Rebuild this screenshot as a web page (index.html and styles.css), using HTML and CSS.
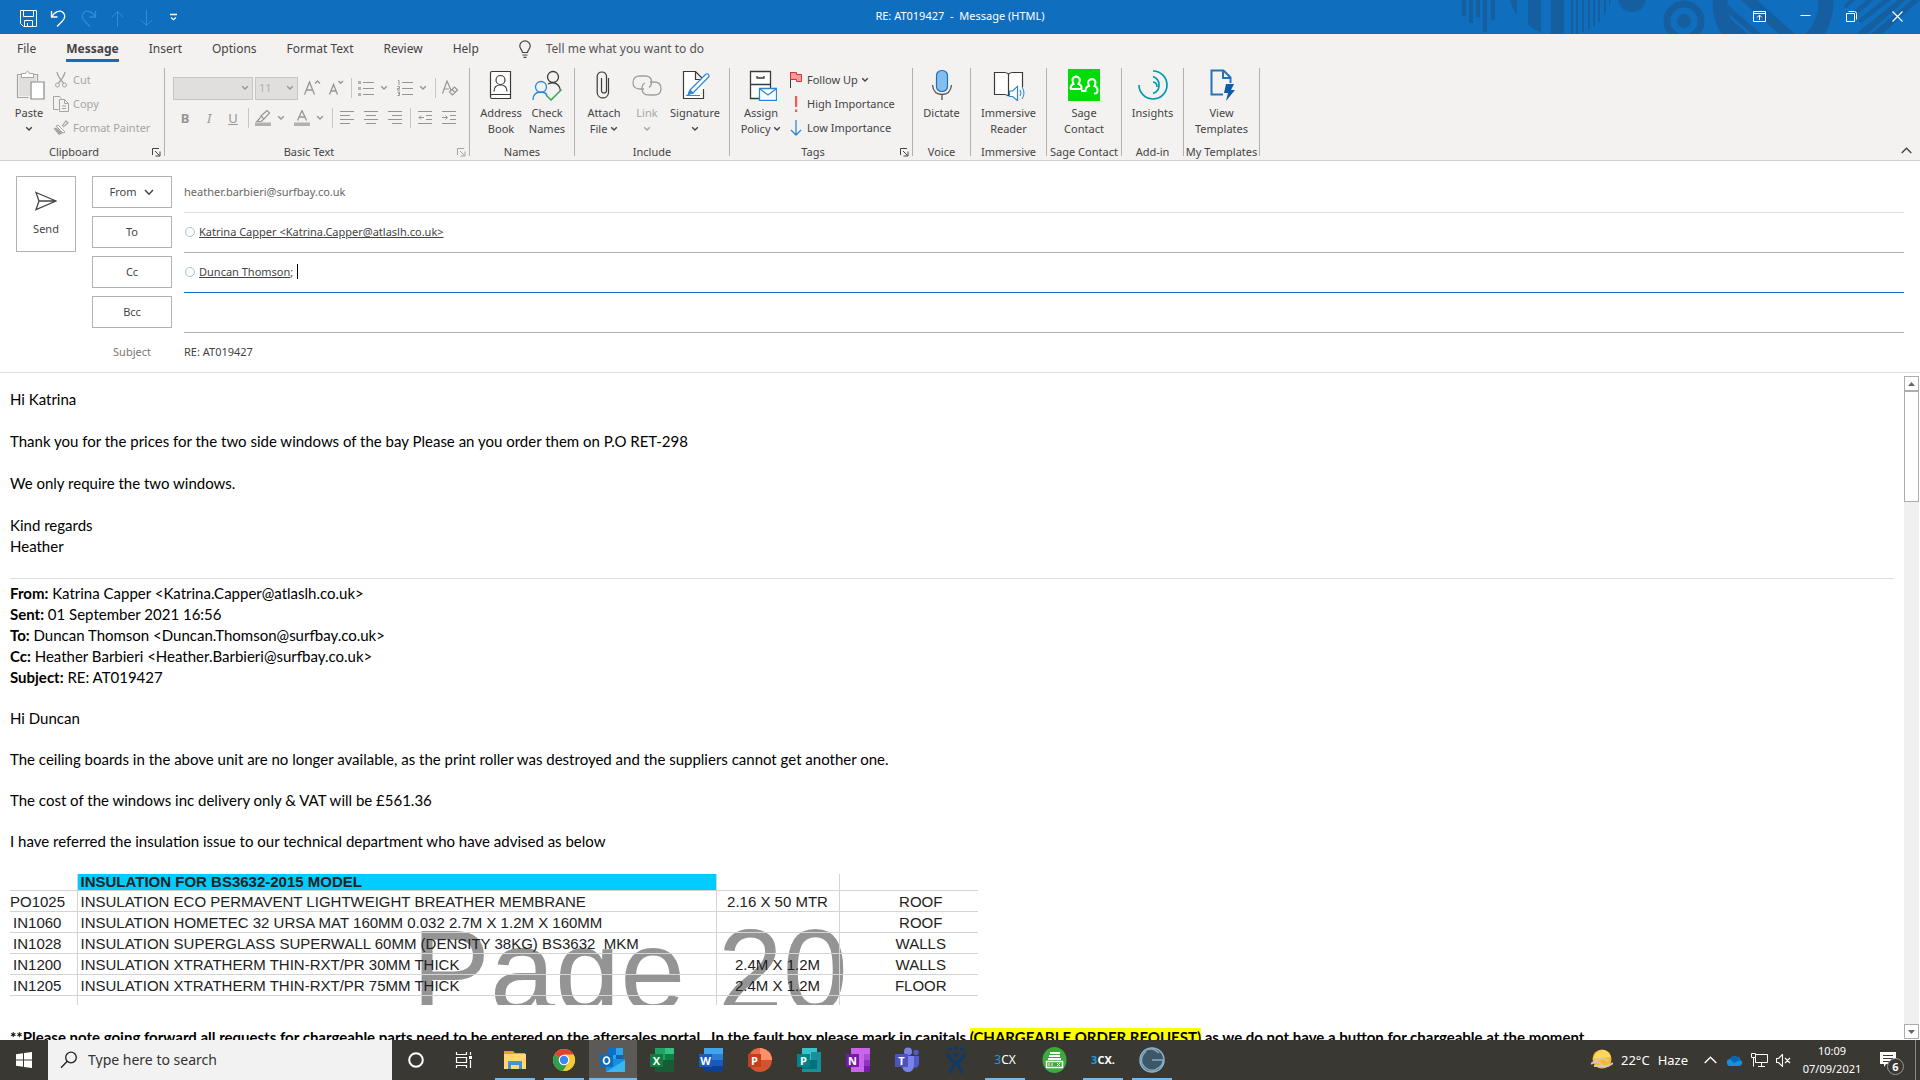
FILE: index.html
```
<!DOCTYPE html>
<html lang="en">
	<head>
		<meta charset="utf-8" />
		<title>RE: AT019427 - Message (HTML)</title>
		<link rel="stylesheet" href="styles.css">
	</head>
	<body>
		<svg class="defs" width="0" height="0">
			<symbol id="chev" viewBox="0 0 8 6"><path d="M1.2 1.2 4 4 6.8 1.2" fill="none" stroke="currentColor" stroke-width="1.4"/></symbol>
			<symbol id="launch" viewBox="0 0 9 9"><path d="M.5 7V.5H7M3 3l4.5 4.5M8 3.500V8H3.500" fill="none" stroke="currentColor"/></symbol>
		</svg>

		<!-- title bar -->
		<header class="titlebar">
			<svg class="deco" width="520" height="34" viewBox="0 0 520 34">
				<g fill="#155fa0">
					<path d="M62 0h4v16h-4zM69 0h4v23h-4zM76 0h4v17h-4zM83 0h4v32h-4zM91 0h4v20h-4z"/>
					<path d="M110 0h7v15q-5-7-7-15zM128 0h13v33l-13-8zM151 0h13v34h-13z"/>
					<path d="M171 0h2v34h-2zM176 0h2v34h-2zM182 0h2v32h-2zM188 0h2v30l-2 1zM193 0h2v26l-2 1zM198 0h2v21l-2 2zM204 0h2v13l-2 3zM209 0h2l-2 8z"/>
					<circle cx="232" cy="-2" r="14"/>
					<circle cx="284" cy="21" r="7"/>
					<path d="M341 0h16l38 34h-16zM328 5l33 29h-9L328 13zM328 17l20 17h-9l-11-9z"/>
					<path d="M444 5l6-5h6l-10 8zM451 13 467 0h7l-20 17zM458 20 483 0h8l-30 23zM456 34 498 0h8l-39 34zM471 34 512 0h8l-38 34z"/>
				</g>
				<circle cx="284" cy="21" r="17" fill="none" stroke="#155fa0" stroke-width="7"/>
				<circle cx="373" cy="2" r="53" fill="none" stroke="#155fa0" stroke-width="15"/>
			</svg>
			<div class="quick">
				<button aria-label="Save"><svg width="17" height="17" viewBox="0 0 17 17"><path d="M.5.5h16v16h-13l-3-3zM3.500.5v6h10v-6M4.500 16.500v-6h8v6M7.500 13v3.500" fill="none" stroke="#fff"/></svg></button>
				<button aria-label="Undo"><svg width="17" height="17" viewBox="0 0 17 17"><path d="M1.500 1v6h6M1.500 7C5 1 10 0 13 2.500c3 3 2 6-1 9l-5 5" fill="none" stroke="#fff" stroke-width="1.300"/></svg></button>
				<button aria-label="Redo" class="dim"><svg width="17" height="17" viewBox="0 0 17 17"><path d="M15.500 1v6h-6M15.500 7C12 1 7 0 4 2.500c-3 3-2 6 1 9l5 5" fill="none" stroke="currentColor" stroke-width="1.300"/></svg></button>
				<button aria-label="Previous" class="dim"><svg width="17" height="17" viewBox="0 0 17 17"><path d="M7.500 17V1.500M2 7l5.500-5.500L13 7" fill="none" stroke="currentColor"/></svg></button>
				<button aria-label="Next" class="dim"><svg width="17" height="17" viewBox="0 0 17 17"><path d="M6.500 0v15.500M1 10l5.500 5.500L12 10" fill="none" stroke="currentColor"/></svg></button>
				<button aria-label="Customise"><svg width="17" height="17" viewBox="0 0 17 17"><path d="M0 4.500h7M1 7.500l2.500 2.200L6 7.500" fill="none" stroke="#fff" stroke-width="1.300"/></svg></button>
			</div>
			<h1>RE: AT019427&nbsp; -&nbsp; Message (HTML)</h1>
			<div class="winbtns">
				<button aria-label="Ribbon display"><svg width="13" height="11" viewBox="0 0 13 11"><path d="M.5.5h12v10H.5zM.5 2.500h12M6.500 9V4M4 6.500 6.500 4 9 6.500" fill="none" stroke="#fff"/></svg></button>
				<button aria-label="Minimise"><svg width="11" height="11" viewBox="0 0 11 11"><path d="M.5 4.500h10" stroke="#fff"/></svg></button>
				<button aria-label="Restore"><svg width="11" height="11" viewBox="0 0 11 11"><path d="M.5 2.500h8v8h-8zM2.500.5h6a2 2 0 0 1 2 2v6" fill="none" stroke="#fff"/></svg></button>
				<button aria-label="Close"><svg width="11" height="11" viewBox="0 0 11 11"><path d="m.5.5 10 10m0-10-10 10" stroke="#fff" stroke-width="1.200"/></svg></button>
			</div>
		</header>

		<!-- tabs -->
		<nav class="tabs">
			<a href="#">File</a>
			<a href="#" class="active">Message</a>
			<a href="#">Insert</a>
			<a href="#">Options</a>
			<a href="#">Format Text</a>
			<a href="#">Review</a>
			<a href="#">Help</a>
			<label class="tell">
				<svg width="12" height="18" viewBox="0 0 12 18"><path d="M3.500 12.500c0-2.500-2.700-3.500-2.700-6.500a5.200 5.200 0 0 1 10.400 0c0 3-2.700 4-2.700 6.500zM3.500 15h5M4.500 17.300h3" fill="none" stroke="#444" stroke-width="1.200"/></svg>
				<input type="text" aria-label="Tell me" placeholder="Tell me what you want to do">
			</label>
		</nav>

		<!-- ribbon -->
		<div class="ribbon">
			<section class="group clipboard">
				<div class="tools">
					<button class="big">
						<svg width="32" height="32" viewBox="-2 0 32 32"><path d="M6 5.500H2.500v23h11M19 5.500h3.500V12" fill="none" stroke="#a6a4a2" stroke-width="1.200"/><path d="M4 7h17v6h-6v14H4z" fill="#e1dfdd"/><path d="M6.500 8.500v-4h4q2-4.500 4 0h4v4z" fill="#fff" stroke="#a6a4a2"/><path d="M16 13h13v17H16z" fill="#fff" stroke="#8a8886" stroke-width="1.200"/></svg>
						<span>Paste<br><svg class="ch"><use href="#chev"/></svg></span>
					</button>
					<div class="list off">
						<button><svg width="16" height="16" viewBox="0 0 16 16"><path d="M4 0c1 5 3 7 6.500 11M12 0c-1 5-3 7-6.500 11" fill="none" stroke="currentColor" stroke-width="1.300"/><circle cx="4.500" cy="13" r="2" fill="none" stroke="currentColor"/><circle cx="11.500" cy="13" r="2" fill="none" stroke="currentColor"/></svg>Cut</button>
						<button><svg width="16" height="16" viewBox="0 0 16 16"><path d="M5.500 13.500H.5V.5h6l2 2M6.500 3.500h5l4 4v8h-9zM11.500 3.500v4h4M9 10h4M9 12.500h4" fill="none" stroke="currentColor"/></svg>Copy</button>
						<button><svg width="16" height="16" viewBox="0 0 16 16"><path d="m9 6 4-5 2 2-5 4" fill="none" stroke="currentColor" stroke-width="1.200"/><path d="m5 5 7 7-2 1-7-7z" fill="#fff" stroke="currentColor"/><path d="M3 7.500.5 8.500 6 15l4-2z" fill="currentColor"/></svg>Format Painter</button>
					</div>
				</div>
				<h2>Clipboard <button class="launch" aria-label="Clipboard options"><svg width="9" height="9"><use href="#launch"/></svg></button></h2>
			</section>

			<section class="group basic">
				<div class="tools rows">
					<div class="row">
						<label class="combo font"><select disabled aria-label="Font"><option></option></select><svg class="ch"><use href="#chev"/></svg></label>
						<label class="combo size"><select disabled aria-label="Size"><option>11</option></select><svg class="ch"><use href="#chev"/></svg></label>
						<button class="t" aria-label="Grow font"><svg width="18" height="18" viewBox="0 0 18 18"><path d="M1.500 15.500 6.500 3l5 12.500M3.500 11h6M12 4.500l2.500-2.500L17 4.500" fill="none" stroke="currentColor" stroke-width="1.300"/></svg></button>
						<button class="t" aria-label="Shrink font"><svg width="18" height="18" viewBox="0 0 18 18"><path d="M2.500 15.500 6.500 5.500l4 10M4 12h5M11.500 2l2.200 2.300L16 2" fill="none" stroke="currentColor" stroke-width="1.300"/></svg></button>
						<i class="sep"></i>
						<button class="t" aria-label="Bullets"><svg width="16" height="16" viewBox="0 0 16 16"><path d="M5 2.500h11M5 8.500h11M5 14.500h11" stroke="currentColor"/><path d="M0 1h3v3H0zM0 7h3v3H0zM0 13h3v3H0z" fill="#b3b0ad"/></svg></button>
						<button class="c" aria-label="Bullet styles"><svg class="ch"><use href="#chev"/></svg></button>
						<button class="t" aria-label="Numbering"><svg width="16" height="16" viewBox="0 0 16 16"><path d="M5 2.500h11M5 8.500h11M5 14.500h11M1 .5h1V5M.5 6.500h2v2h-2v1.500H3M.5 12h2v3.500h-2M1 13.500h1.500" stroke="currentColor" fill="none"/></svg></button>
						<button class="c" aria-label="Number styles"><svg class="ch"><use href="#chev"/></svg></button>
						<i class="sep"></i>
						<button class="t" aria-label="Clear formatting"><svg width="18" height="18" viewBox="0 0 18 18"><path d="M1.500 14.500 6 2l4 9M3 10h5M8.500 13l5-5 3 3-5 5zM11 10.500l3 3" fill="none" stroke="currentColor" stroke-width="1.200"/></svg></button>
					</div>
					<div class="row">
						<button class="t"><b>B</b></button>
						<button class="t"><em>I</em></button>
						<button class="t"><u>U</u></button>
						<i class="sep"></i>
						<button class="t" aria-label="Highlight"><svg width="16" height="16" viewBox="0 0 16 16"><path d="m6 6 6-5.500L14.500 3 9 9zM6 6l-1 2-3 3.500h4L9 9" fill="none" stroke="currentColor" stroke-width="1.200"/><path d="M0 12.500h16V16H0z" fill="#b3b0ad"/></svg></button>
						<button class="c" aria-label="Highlight colours"><svg class="ch"><use href="#chev"/></svg></button>
						<button class="t" aria-label="Font colour"><svg width="16" height="16" viewBox="0 0 16 16"><path d="m3.500 10.500 4.500-10 4.500 10M5 7h6" fill="none" stroke="currentColor" stroke-width="1.300"/><path d="M0 12.500h16V16H0z" fill="#b3b0ad"/></svg></button>
						<button class="c" aria-label="Font colours"><svg class="ch"><use href="#chev"/></svg></button>
						<i class="sep"></i>
						<button class="t" aria-label="Left"><svg width="14" height="14"><path d="M0 .5h14M0 4.500h10M0 8.500h14M0 12.500h10" stroke="currentColor"/></svg></button>
						<button class="t" aria-label="Centre"><svg width="14" height="14"><path d="M0 .5h14M2 4.500h10M0 8.500h14M2 12.500h10" stroke="currentColor"/></svg></button>
						<button class="t" aria-label="Right"><svg width="14" height="14"><path d="M0 .5h14M4 4.500h10M0 8.500h14M4 12.500h10" stroke="currentColor"/></svg></button>
						<i class="sep"></i>
						<button class="t" aria-label="Decrease indent"><svg width="14" height="14"><path d="M0 .5h14M8 4.500h6M8 8.500h6M0 12.500h14M6 6.500H1M3 4.500l-2 2 2 2" stroke="currentColor" fill="none"/></svg></button>
						<button class="t" aria-label="Increase indent"><svg width="14" height="14"><path d="M0 .5h14M8 4.500h6M8 8.500h6M0 12.500h14M0 6.500h5M3.500 4.500l2 2-2 2" stroke="currentColor" fill="none"/></svg></button>
					</div>
				</div>
				<h2>Basic Text <button class="launch off" aria-label="Text options"><svg width="9" height="9"><use href="#launch"/></svg></button></h2>
			</section>

			<section class="group names">
				<div class="tools">
					<button class="big">
						<svg width="32" height="32" viewBox="0 0 32 32"><path d="M5.500 4q0-1.500 1.500-1.500h18.500v27H7q-1.500 0-1.500-1.500zM5.500 27q0-1.500 1.500-1.500h18.500" fill="#fff" stroke="#3b3a39" stroke-width="1.200"/><circle cx="15.500" cy="11" r="4.500" fill="none" stroke="#3b3a39" stroke-width="1.200"/><path d="M9 22.500q0-6.500 6.500-6.500t6.500 6.500" fill="none" stroke="#3b3a39" stroke-width="1.200"/></svg>
						<span>Address<br>Book</span>
					</button>
					<button class="big">
						<svg width="32" height="32" viewBox="0 0 32 32"><g fill="none" stroke-width="1.300"><circle cx="22" cy="8" r="5.500" stroke="#3b3a39"/><path d="M17 15q6-3 10 1 2 2 2.500 6" stroke="#3b3a39"/><circle cx="10" cy="18" r="5.500" stroke="#2b88d8"/><path d="M2 31q0-8 8-8 4 0 6 3" stroke="#2b88d8"/><path d="m15 26 5 5L30.500 20.500" stroke="#3aa356" stroke-width="1.500"/></g></svg>
						<span>Check<br>Names</span>
					</button>
				</div>
				<h2>Names</h2>
			</section>

			<section class="group include">
				<div class="tools">
					<button class="big">
						<svg width="32" height="32" viewBox="0 0 32 32"><path d="M13.500 9v12.500a2.500 2.500 0 0 0 5 0V7a4.700 4.700 0 0 0-9.300 0v17a5.700 5.700 0 0 0 11.300 0V9" fill="none" stroke="#3b3a39" stroke-width="1.200"/></svg>
						<span>Attach<br>File <svg class="ch"><use href="#chev"/></svg></span>
					</button>
					<button class="big slim off">
						<svg width="32" height="32" viewBox="0 0 32 32"><path d="M13 20H9q-7 0-7-6.500T9 7h5q6.500 0 6.500 6 0 4-2.500 5.500M19 13h4q7 0 7 6.500T23 26h-5q-7 0-7-6.500 0-4 3-5.500" fill="none" stroke="#a19f9d" stroke-width="1.300"/></svg>
						<span>Link<br><svg class="ch"><use href="#chev"/></svg></span>
					</button>
					<button class="big wide">
						<svg width="32" height="32" viewBox="0 0 32 32"><path d="M24.500 20v9.500h-20v-27h12l8 8M16.500 2.500v8h8" fill="#fff" stroke="#3b3a39" stroke-width="1.200"/><path d="m11 21 16-16q3-1 3 2.500L14.500 23.500 9.500 25z" fill="#fff" stroke="#2b88d8" stroke-width="1.300"/><path d="m11 21 3.500 3-5.500 1.500zM7 26.500h14" fill="#2b88d8" stroke="#2b88d8"/></svg>
						<span>Signature<br><svg class="ch"><use href="#chev"/></svg></span>
					</button>
				</div>
				<h2>Include</h2>
			</section>

			<section class="group tags">
				<div class="tools">
					<button class="big">
						<svg width="32" height="32" viewBox="0 0 32 32"><path d="M5.500 2.500h20v27h-20zM5.500 15.500h20M12 7v2h7V7" fill="#fff" stroke="#3b3a39" stroke-width="1.300"/><path d="M14.500 19.500h17v12h-17z" fill="#fff" stroke="#2b88d8" stroke-width="1.300"/><path d="m15 20 8 6 8-6" fill="none" stroke="#2b88d8" stroke-width="1.300"/></svg>
						<span>Assign<br>Policy <svg class="ch"><use href="#chev"/></svg></span>
					</button>
					<div class="list">
						<button><svg width="12" height="16" viewBox="0 0 12 16"><path d="M.5 0v16" stroke="#3b3a39"/><path d="M.5.5h6v2h5v7h-5v-2h-6z" fill="#f99" stroke="#d13438"/></svg><span>Follow Up <svg class="ch"><use href="#chev"/></svg></span></button>
						<button><svg width="12" height="16" viewBox="0 0 12 16"><path d="M5 0h2.200v11H5zM5 13.500h2.200V16H5z" fill="#f1585c"/></svg>High Importance</button>
						<button><svg width="12" height="16" viewBox="0 0 12 16"><path d="M6 0v15M1 10l5 5 5-5" fill="none" stroke="#2b88d8" stroke-width="1.300"/></svg>Low Importance</button>
					</div>
				</div>
				<h2>Tags <button class="launch" aria-label="Tag options"><svg width="9" height="9"><use href="#launch"/></svg></button></h2>
			</section>

			<section class="group voice">
				<div class="tools">
					<button class="big">
						<svg width="32" height="32" viewBox="0 0 32 32"><rect x="10.500" y="1.500" width="11" height="21" rx="5" fill="#83beec" stroke="#1e6fbf" stroke-width="1.200"/><path d="M6.500 16q1 9.500 9.500 9.500t9.500-9.500M16 25.500V31" fill="none" stroke="#555" stroke-width="1.300"/></svg>
						<span>Dictate</span>
					</button>
				</div>
				<h2>Voice</h2>
			</section>

			<section class="group immersive">
				<div class="tools">
					<button class="big wide">
						<svg width="32" height="32" viewBox="0 0 32 32"><path d="M15.500 5q-2-1.500-4-1.500h-10v22h10q2 0 4 1.500M15.500 27V5q2-1.500 4-1.500h10V18" fill="#fff" stroke="#3b3a39" stroke-width="1.200"/><path d="M16.500 22h3l5-4.500v14l-5-4h-3z" fill="#fff" stroke="#2b88d8" stroke-width="1.200"/><path d="M27 21q2 3 0 6M29 18q4 6 0 12" fill="none" stroke="#2b88d8"/></svg>
						<span>Immersive<br>Reader</span>
					</button>
				</div>
				<h2>Immersive</h2>
			</section>

			<section class="group sage">
				<div class="tools">
					<button class="big wide">
						<svg width="32" height="32" viewBox="0 0 32 32"><path d="M0 0h32v32H0z" fill="#00dc06"/><path d="M2 20h11.500v-1.500q0-2.500-3-3.500 2-3.500 1-5.500-1.500-2-3.500-2-3 .5-3.500 3 0 2.500 1 4.500-3 1-3 5zM13 22h4.500q0-4 3.500-5-1.500-3-.5-5 1.500-2 3.500-2 3 .5 3.500 3 0 2.500-1 4 3 1 3 4.500t-3.500 3" fill="none" stroke="#fff" stroke-width="2"/></svg>
						<span>Sage<br>Contact</span>
					</button>
				</div>
				<h2>Sage Contact</h2>
			</section>

			<section class="group addin">
				<div class="tools">
					<button class="big">
						<svg width="32" height="32" viewBox="0 0 32 32"><g fill="none" stroke="#0099ad" stroke-width="1.700"><path d="M16 2a14 14 0 1 1-14 14"/><path d="M16 7.500a9 9 0 0 1 0 17"/><path d="M16 13q4 .5 4 5"/></g></svg>
						<span>Insights</span>
					</button>
				</div>
				<h2>Add-in</h2>
			</section>

			<section class="group templates">
				<div class="tools">
					<button class="big wide">
						<svg width="32" height="32" viewBox="0 0 32 32"><path d="M17 25.500H5.500v-24h12l7 7V14M17 1.500V9h7.500" fill="none" stroke="#2372ba" stroke-width="2"/><path d="m20 15h8l-3 6h4l-9 11 2-8h-4z" fill="#0f5ba7"/></svg>
						<span>View<br>Templates</span>
					</button>
				</div>
				<h2>My Templates</h2>
			</section>
			<button class="collapse" aria-label="Collapse ribbon"><svg width="11" height="7"><path d="M.7 6 5.500 1.200 10.300 6" fill="none" stroke="#444" stroke-width="1.400"/></svg></button>
		</div>

		<!-- address fields -->
		<form class="compose">
			<button type="button" class="send"><svg width="22" height="20" viewBox="0 0 22 20"><path d="M1 1.500 21 10 1 18.500 4 10zM4 10h16" fill="none" stroke="#444" stroke-width="1.300"/></svg>Send</button>
			<div class="fields">
				<div class="line from">
					<button type="button">From <svg width="10" height="7"><path d="m1 1 4 4.200L9 1" fill="none" stroke="#444" stroke-width="1.500"/></svg></button>
					<div class="field"><input type="text" aria-label="From" value="heather.barbieri@surfbay.co.uk"></div>
				</div>
				<div class="line">
					<button type="button">To</button>
					<div class="field"><i class="presence"></i><a href="#">Katrina Capper &lt;Katrina.Capper@atlaslh.co.uk&gt;</a><input type="text" aria-label="To"></div>
				</div>
				<div class="line focus">
					<button type="button">Cc</button>
					<div class="field"><i class="presence"></i><a href="#">Duncan Thomson</a>;<i class="caret"></i><input type="text" aria-label="Cc"></div>
				</div>
				<div class="line">
					<button type="button">Bcc</button>
					<div class="field"><input type="text" aria-label="Bcc"></div>
				</div>
				<div class="line subject">
					<label for="subject">Subject</label>
					<div class="field"><input type="text" id="subject" value="RE: AT019427"></div>
				</div>
			</div>
		</form>

		<!-- message -->
		<main class="message">
			<div class="mail">
				<p>Hi Katrina</p>
				<p>Thank you for the prices for the two side windows of the bay Please an you order them on P.O RET-298</p>
				<p>We only require the two windows.</p>
				<p>Kind regards<br>Heather</p>
				<div class="quoted">
					<p><b>From:</b> Katrina Capper &lt;Katrina.Capper@atlaslh.co.uk&gt;<br>
					<b>Sent:</b> 01 September 2021 16:56<br>
					<b>To:</b> Duncan Thomson &lt;Duncan.Thomson@surfbay.co.uk&gt;<br>
					<b>Cc:</b> Heather Barbieri &lt;Heather.Barbieri@surfbay.co.uk&gt;<br>
					<b>Subject:</b> RE: AT019427</p>
					<p>Hi Duncan</p>
					<p>The ceiling boards in the above unit are no longer available, as the print roller was destroyed and the suppliers cannot get another one.</p>
					<p>The cost of the windows inc delivery only &amp; VAT will be £561.36</p>
					<p>I have referred the insulation issue to our technical department who have advised as below</p>
					<div class="sheet">
						<span class="watermark">Page 20</span>
						<table>
							<colgroup><col class="code"><col class="desc"><col class="dims"><col class="area"></colgroup>
							<tr class="head"><td></td><th>INSULATION FOR BS3632-2015 MODEL</th><td></td><td></td></tr>
							<tr><td>PO1025</td><td>INSULATION ECO PERMAVENT LIGHTWEIGHT BREATHER MEMBRANE</td><td>2.16 X 50 MTR</td><td>ROOF</td></tr>
							<tr><td>IN1060</td><td>INSULATION HOMETEC 32 URSA MAT 160MM 0.032 2.7M X 1.2M X 160MM</td><td></td><td>ROOF</td></tr>
							<tr><td>IN1028</td><td>INSULATION SUPERGLASS SUPERWALL 60MM (DENSITY 38KG) BS3632&nbsp; MKM</td><td></td><td>WALLS</td></tr>
							<tr><td>IN1200</td><td>INSULATION XTRATHERM THIN-RXT/PR 30MM THICK</td><td>2.4M X 1.2M</td><td>WALLS</td></tr>
							<tr><td>IN1205</td><td>INSULATION XTRATHERM THIN-RXT/PR 75MM THICK</td><td>2.4M X 1.2M</td><td>FLOOR</td></tr>
							<tr class="foot"><td></td><td></td><td></td><td></td></tr>
						</table>
					</div>
					<p class="note">**Please note going forward all requests for chargeable parts need to be entered on the aftersales portal.&nbsp; In the fault box please mark in capitals <mark>(CHARGEABLE ORDER REQUEST)</mark> as we do not have a button for chargeable at the moment</p>
				</div>
			</div>
			<div class="scroll">
				<button aria-label="Scroll up"><svg width="7" height="4"><path d="M0 4 3.500 0 7 4z" fill="#666"/></svg></button>
				<div class="thumb"></div>
				<div class="track"></div>
				<button aria-label="Scroll down"><svg width="7" height="4"><path d="M0 0h7L3.500 4z" fill="#666"/></svg></button>
			</div>
		</main>

		<!-- taskbar -->
		<footer class="taskbar">
			<button class="start" aria-label="Start"><svg width="16" height="16" viewBox="0 0 16 16"><path d="M0 2.300 7 1.300v6.200H0zM8 1.100 16 0v7.500H8zM0 8.500h7v6.200l-7-1zM8 8.500h8V16l-8-1.100z" fill="#fff"/></svg></button>
			<label class="search"><svg width="18" height="18" viewBox="0 0 18 18"><circle cx="11" cy="6.500" r="5.300" fill="none" stroke="#222" stroke-width="1.300"/><path d="M7.300 10.300 1 16.700" stroke="#222" stroke-width="1.300"/></svg><input type="text" aria-label="Search" placeholder="Type here to search"></label>
			<button class="sys" aria-label="Cortana"><svg width="18" height="18"><circle cx="9" cy="9" r="6.800" fill="none" stroke="#fff" stroke-width="2"/></svg></button>
			<button class="sys" aria-label="Task view"><svg width="18" height="18" viewBox="0 0 18 18"><path d="M1.500 1v2.500h10V1M1.500 6.500h10v5h-10zM1.500 17v-2.500h10V17M15.500 1v3M15.500 9v8" fill="none" stroke="#fff" stroke-width="1.200"/><path d="M14 5h3v3h-3z" fill="#fff"/></svg></button>
			<div class="apps">
				<button class="on" aria-label="Explorer"><svg width="24" height="24" viewBox="0 0 24 24"><path d="M1 3h9l2 2h10v16H1z" fill="#e8a317"/><path d="M1 6h22v15H1z" fill="#ffd970"/><path d="M5 21v-7q0-1 1-1h12q1 0 1 1v7h-3v-4H8v4z" fill="#3f95d8"/></svg></button>
				<button class="on" aria-label="Chrome"><svg width="24" height="24" viewBox="0 0 24 24"><circle cx="12" cy="12" r="11" fill="#f9c932"/><path d="M12 12 2.500 6.500A11 11 0 0 1 21.500 6.500z" fill="#e24234"/><path d="M2.500 6.500A11 11 0 0 0 11 23l5-8-4-3z" fill="#2d9f4d"/><path d="M12 6.500h9.500a11 11 0 0 1-10.500 16.500l5.500-8z" fill="#f9c932"/><circle cx="12" cy="12" r="5.300" fill="#fff"/><circle cx="12" cy="12" r="4.200" fill="#4285f4"/></svg></button>
				<button class="on current" aria-label="Outlook"><svg width="26" height="26" viewBox="0 0 26 26"><path d="M8 1h15v14H8z" fill="#28a8ea"/><path d="M8 1h8v7H8z" fill="#0f6fc6"/><path d="M16 8h7v7h-7z" fill="#0f64b5"/><path d="M6 12h19v13H6z" fill="#1490df"/><path d="m25 13-19 12h19z" fill="#3bb6f2"/><path d="M0 7h13v13H0z" fill="#0f6cbd"/><ellipse cx="6.500" cy="13.500" rx="3" ry="3.500" fill="none" stroke="#fff" stroke-width="1.700"/></svg></button>
				<button aria-label="Excel"><svg class="office" width="26" height="26" viewBox="0 0 26 26"><path d="M6 1h19v24H6z" fill="#185c37"/><path d="M6 1h10v6H6zM6 7h10v6H6z" fill="#21a366"/><path d="M16 1h9v6h-9z" fill="#33c481"/><path d="M16 7h9v6h-9z" fill="#107c41"/><path d="M1 7h13v13H1z" fill="#107c41"/><text x="7.500" y="17.500">X</text></svg></button>
				<button aria-label="Word"><svg class="office" width="26" height="26" viewBox="0 0 26 26"><path d="M6 1h19v6H6z" fill="#41a5ee"/><path d="M6 7h19v6H6z" fill="#2b7cd3"/><path d="M6 13h19v6H6z" fill="#185abd"/><path d="M6 19h19v6H6z" fill="#103f91"/><path d="M1 7h13v13H1z" fill="#185abd"/><text x="7.500" y="17.500">W</text></svg></button>
				<button aria-label="PowerPoint"><svg class="office" width="26" height="26" viewBox="0 0 26 26"><circle cx="13" cy="13" r="12" fill="#d35230"/><path d="M13 1a12 12 0 0 1 12 12H13z" fill="#ff8f6b"/><path d="M13 1A12 12 0 0 0 3 7l10 6z" fill="#ed6c47"/><path d="M1 7h13v13H1z" fill="#c43e1c"/><text x="7.500" y="17.500">P</text></svg></button>
				<button aria-label="Publisher"><svg class="office" width="26" height="26" viewBox="0 0 26 26"><path d="M6 1h15v21H6z" fill="#37c6d0"/><path d="M15 5h10v20H6V13h9z" fill="#1a8f98"/><path d="M6 13h15v9H6z" fill="#04727a"/><path d="M1 7h13v13H1z" fill="#038387"/><text x="7.500" y="17.500">P</text></svg></button>
				<button aria-label="OneNote"><svg class="office" width="26" height="26" viewBox="0 0 26 26"><path d="M6 1h19v24H6z" fill="#ca64ea"/><path d="M19 7h6v6h-6z" fill="#ae4bd5"/><path d="M19 13h6v6h-6z" fill="#9332bf"/><path d="M19 19h6v6h-6z" fill="#7719aa"/><path d="M1 7h13v13H1z" fill="#7719aa"/><text x="7.500" y="17.500">N</text></svg></button>
				<button aria-label="Teams"><svg class="office" width="26" height="26" viewBox="0 0 26 26"><circle cx="14" cy="4.500" r="4" fill="#7b83eb"/><circle cx="22" cy="5.500" r="2.700" fill="#5059c9"/><path d="M18 9h7v8q-1 4-5 4z" fill="#5059c9"/><path d="M8 9h12v10q-1 6-6 6t-6-6z" fill="#7b83eb"/><path d="M1 7h13v13H1z" fill="#4b53bc"/><text x="7.500" y="17.500">T</text></svg></button>
				<button aria-label="Jira"><svg width="22" height="28" viewBox="0 0 22 28"><g fill="#0b3c6f"><circle cx="5" cy="3" r="2"/><circle cx="11" cy="2" r="2"/><circle cx="17" cy="3" r="2"/><circle cx="11" cy="9" r="2.500"/></g><path d="M3 7q0 6 6 9t8 11M19 7q0 6-6 9T5 27" fill="none" stroke="#0b3c6f" stroke-width="3"/></svg></button>
				<button class="on cx"><span>3</span>CX</button>
				<button aria-label="Till"><svg width="25" height="28" viewBox="0 0 25 28"><ellipse cx="12.500" cy="14" rx="12" ry="13" fill="#3cab3c"/><path d="M8 6h10v2H8zM7 9h11v2H7zM6 12h13v2H6z" fill="#fff"/><path d="M4.500 15.500h16v6h-16z" fill="none" stroke="#fff" stroke-width="1.500"/><path d="M7 17v3M10 17v3M15 17l3 3M18 17l-3 3" stroke="#fff"/></svg></button>
				<button class="on cx dark"><span>3</span>CX.</button>
				<button class="on" aria-label="G"><svg width="26" height="28" viewBox="0 0 26 28"><circle cx="13" cy="14" r="12" fill="#3d5668" stroke="#8fb4cd" stroke-width="1.500"/><path d="M5 5q8-5 15 2M7 5.500q-6 5-4 12 5 9 15 6M13 14h11q0 7-7 9" fill="none" stroke="#83a9c3" stroke-width="1.500"/></svg></button>
			</div>
			<div class="tray">
				<svg class="sun" width="22" height="22" viewBox="0 0 22 22"><circle cx="11" cy="10" r="9.500" fill="#fdb827"/><path d="M2 10q2-8 10-9 5 0 8 7z" fill="#ffd75e"/><path d="M4 12q7-5 13 0M0 15q6-5 10 0t12-1M3 17h12" fill="none" stroke="#d2c9bd" stroke-width="2"/></svg>
				<span class="weather">22°C</span><span class="weather">Haze</span>
				<svg class="up" width="13" height="8"><path d="M.7 7 6.500 1.200 12.300 7" fill="none" stroke="#fff" stroke-width="1.400"/></svg>
				<svg width="17" height="11" viewBox="0 0 17 11"><path d="M1 8q-1-3 3-4 3-5 7-2 3 0 3 3 3 1 2 4-1 2-3 2H4q-3 0-3-3z" fill="#1490df"/><path d="M4 4q3-5 7-2 2 1 3 3L8 8z" fill="#0364b8"/></svg>
				<svg width="17" height="14" viewBox="0 0 17 14"><path d="M5 1.500h11.500v8H4.500V5M10.500 9.500v4M7 13.500h7M.5.500h4v4h-4zM2.500 5v8.500" fill="none" stroke="#fff"/></svg>
				<svg width="15" height="13" viewBox="0 0 15 13"><path d="M.5 4.500h2l4-4v12l-4-4h-2zM9 4l5 5m0-5-5 5" fill="none" stroke="#fff" stroke-width="1.100"/></svg>
				<time>10:09<br>07/09/2021</time>
				<button class="notify" aria-label="Notifications"><svg width="16" height="16" viewBox="0 0 16 16"><path d="M0 0h16v12H6l-2 3v-3H0z" fill="#fff"/><path d="M3 3.500h10M3 6.500h10M3 9.500h6" stroke="#3a3833"/></svg><span>6</span></button>
			</div>
		</footer>
	</body>
</html>
```
FILE: styles.css
```
*{box-sizing:border-box;}
html,body{height:100%;margin:0;}
body{display:flex; flex-direction:column; overflow:hidden; font:11px/16px "Noto Sans","Open Sans",sans-serif; color:#444; background:#fff;}
h1,h2,p{margin:0; font-weight:normal;}
button{padding:0; border:0; background:none; font:inherit; color:inherit;}
input,select{padding:0; border:0; outline:0; background:none; font:inherit; color:inherit; min-width:0;}
a{color:inherit; text-decoration:none;}
svg{flex:none;}
.defs{position:absolute;}
.ch{width:8px; height:6px; vertical-align:1px;}
.off{color:#a6a4a2;}

/* title bar */
.titlebar{position:relative; flex:none; display:grid; grid-template-columns:1fr auto 1fr; align-items:center; height:34px; padding-bottom:2px; background:#106ebe; color:#fff;}
.titlebar h1{position:relative; font-size:11px;}
.deco{position:absolute; top:0; right:0;}
.quick{display:flex; gap:12px; padding-left:20px;}
.quick button{display:flex; width:18px; margin-top:4px;}
.quick .dim{color:#2f8ae0;}
.winbtns{position:relative; display:flex; justify-content:flex-end;}
.winbtns button{display:flex; justify-content:center; align-items:center; width:46px; height:32px;}

/* tabs */
.tabs{flex:none; display:flex; align-items:flex-start; gap:30px; height:34px; padding:5px 17px 0; background:#f3f2f1; font-size:12px; line-height:20px;}
.tabs a{height:23px;}
.tabs .active{font-weight:bold; border-bottom:3px solid #106ebe;}
.tell{display:flex; align-items:center; gap:15px; margin-left:10px;}
.tell input{width:240px; height:20px;}
.tell input::placeholder{color:#555; opacity:1;}

/* ribbon */
.ribbon{position:relative; flex:none; display:flex; height:93px; background:#f3f2f1; border-bottom:1px solid #d2d0ce;}
.group{height:88px; border-right:1px solid #b3b0ad;}
.group h2{position:relative; font-size:11px; line-height:12px; text-align:center; white-space:nowrap;}
.launch{position:absolute; right:3px; top:2px; display:flex;}
.tools{display:flex; justify-content:center; height:78px;}
.big{display:flex; flex-direction:column; align-items:center; gap:4px; width:46px; padding-top:1px; white-space:nowrap;}
.big.wide{width:56px;}
.big.slim{width:40px;}
.list{display:flex; flex-direction:column;}
.list button{display:flex; align-items:center; gap:4px; height:24px; white-space:nowrap;}
.clipboard{width:165px;}
.clipboard .tools{justify-content:flex-start; padding-left:6px;}
.clipboard .list{padding-left:1px;}
.clipboard h2,.basic h2{padding-right:16px;}
.basic{width:305px;}
.names{width:105px;}
.names .tools{padding-left:4px;}
.include{width:155px;}
.tags{width:183px;}
.tags .tools{justify-content:flex-start; gap:6px; padding-left:8px;}
.tags h2{padding-right:16px;}
.tags .list button{gap:5px;}
.voice{width:58px;}
.immersive{width:76px;}
.sage{width:75px;}
.addin{width:62px;}
.templates{width:76px;}
.tools.rows{flex-direction:column; justify-content:flex-start; padding:5px 0 0 8px; color:#979593;}
.row{display:flex; align-items:center; height:30px;}
.t{display:flex; justify-content:center; align-items:center; width:24px; height:24px; font-size:13px;}
.c{display:flex; justify-content:center; width:12px; margin-right:3px;}
.sep{width:1px; height:20px; margin:0 2px 0 3px; background:#c8c6c4;}
.combo{display:flex; align-items:center; height:23px; margin-right:2px; padding:0 3px; background:#e1dfdd; border:1px solid #c8c6c4;}
.combo select{flex:1; appearance:none; color:#b3b0ad; opacity:1;}
.font{width:80px;}
.size{width:43px;}
.collapse{position:absolute; right:8px; bottom:2px;}

/* address fields */
.compose{flex:none; display:flex; align-items:flex-start; gap:16px; padding:12px 16px 0; border-bottom:1px solid #e1dfdd;}
.send{display:flex; flex-direction:column; align-items:center; justify-content:center; gap:10px; width:60px; height:76px; margin-top:3px; border:1px solid #b3b0ad;}
.fields{flex:1;}
.line{display:flex; align-items:flex-start; gap:12px;}
.line button{display:flex; align-items:center; justify-content:center; gap:8px; width:80px; height:32px; margin-top:3px; border:1px solid #b3b0ad;}
.line label{width:80px; line-height:37px; text-align:center; color:#797775;}
.field{flex:1; display:flex; align-items:center; height:40px; padding-bottom:2px; border-bottom:1px solid #b3b0ad;}
.field a{text-decoration:underline;}
.field input{flex:1;}
.from .field{border-color:#e1dfdd;}
.from input{color:#666;}
.focus .field{border-color:#106ebe;}
.subject .field{height:39px; border:0;}
.presence{width:10px; height:10px; margin:0 4px 0 1px; border:1px solid #a3c5d0; border-radius:50%;}
.caret{width:1px; height:15px; margin-left:4px; background:#000;}

/* message */
.message{flex:1; min-height:0; display:flex;}
.mail{flex:1; overflow:hidden; padding:16px 10px 0; font:15px/21px Lato,"Open Sans",sans-serif; color:#000;}
.mail p{margin-bottom:21px;}
.quoted{border-top:1px solid #e1dfdd; padding-top:4px;}
.quoted p{margin-bottom:20px;}
.sheet{position:relative; width:968px; height:131px; margin:22px 0; overflow:hidden;}
.sheet table{position:relative; width:100%; table-layout:fixed; border-collapse:collapse; font:15px/18px "Liberation Sans",Arial,sans-serif; color:#222;}
.sheet td,.sheet th{height:21px; padding:2px 0 0; border-bottom:1px solid #d4d4d4; border-right:1px solid #d4d4d4; text-align:center; white-space:nowrap;}
.sheet td:nth-child(2),.sheet th{padding-left:3px; text-align:left;}
.sheet td:first-child{padding-right:12px;}
.sheet td:last-child{border-right:0; padding-left:24px;}
.sheet .head td,.sheet .head th{height:16px; line-height:14px; padding-top:0;}
.sheet .head th{background:#00ccff;}
.sheet .foot td{height:11px; border-bottom:0;}
.code{width:67px;}
.desc{width:639px;}
.dims{width:123px;}
.watermark{position:absolute; left:402px; top:38px; font:117px/117px "Liberation Sans",Arial,sans-serif; color:#949494; white-space:nowrap;}
.note{font-weight:bold; white-space:nowrap;}
.note mark{background:#ff0;}
.scroll{display:flex; flex-direction:column; width:16px; padding:3px 1px 1px 0; background:#fff;}
.scroll button{display:flex; align-items:center; justify-content:center; height:15px; border:1px solid #acacac;}
.thumb{height:111px; border:1px solid #acacac;}
.track{flex:1; background:#f0f0f0;}

/* taskbar */
.taskbar{flex:none; display:flex; height:40px; background:#3a3833; color:#fff;}
.taskbar button{display:flex; align-items:center; justify-content:center;}
.start,.sys{width:48px;}
.search{display:flex; align-items:center; gap:10px; width:344px; padding-left:12px; background:#f2f2f2;}
.search input{flex:1; font-size:14px; color:#333;}
.search input::placeholder{color:#333; opacity:1;}
.apps{display:flex; gap:9px; padding-left:7px;}
.apps button{width:40px; border-bottom:2px solid transparent; border-top:2px solid transparent;}
.apps .on{border-bottom-color:#76b9ed;}
.apps .current{width:48px; margin:0 -4px; background:#5c5a57; border-top-color:#5c5a57;}
.office text{font:bold 11px "Open Sans",sans-serif; fill:#fff; text-anchor:middle;}
.cx{font-size:12px;}
.cx span{color:#1a9ad7;}
.cx.dark{font-weight:bold; font-size:11px;}
.tray{display:flex; align-items:center; gap:8px; margin-left:auto; margin-right:4px; padding-right:12px; border-right:1px solid #888;}
.weather{font-size:13px;}
.tray .up{margin:0 1px 0 8px;}
.tray time{width:66px; text-align:center; font-size:11px; line-height:18px;}
.notify{position:relative; width:30px;}
.notify span{position:absolute; left:14px; top:6px; width:17px; height:17px; border:1px solid #999; border-radius:50%; background:#3a3833; font-weight:bold; line-height:15px;}
```
